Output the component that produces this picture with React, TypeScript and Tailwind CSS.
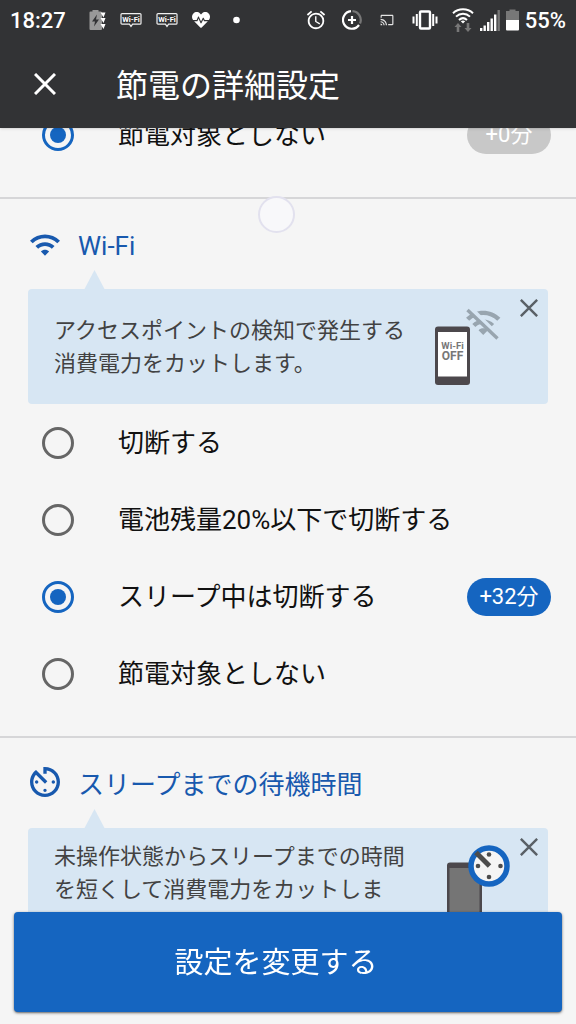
import { useState } from "react"
import type { ReactNode } from "react"
import { FaHeartbeat } from "react-icons/fa"
import { MdAccessAlarm, MdCast } from "react-icons/md"

type Option = { value: string; label: string; gain?: string }

const skipOption: Option = { value: "none", label: "節電対象としない", gain: "+0分" }

const wifiOptions: Option[] = [
  { value: "off", label: "切断する" },
  { value: "low", label: "電池残量20%以下で切断する" },
  { value: "sleep", label: "スリープ中は切断する", gain: "+32分" },
  { value: "none", label: "節電対象としない" },
]

const wifiPath =
  "M1 9l2 2c4.970-4.970 13.030-4.970 18 0l2-2C16.930 2.930 7.080 2.930 1 9zm8 8l3 3 3-3c-1.650-1.660-4.340-1.660-6 0zm-4-4l2 2c2.760-2.760 7.240-2.760 10 0l2-2C15.140 9.140 8.870 9.140 5 13z"

const WifiBubble = () => (
  <svg className="w-[22px] h-4 shrink-0" viewBox="0 0 22 16" fill="none" stroke="#f0f0f0" strokeWidth="1.2">
    <path d="M2 1.6h18a1 1 0 0 1 1 1v8.6a1 1 0 0 1-1 1h-7.4L11 14.4l-1.6-2.2H2a1 1 0 0 1-1-1V2.6a1 1 0 0 1 1-1z" />
    <text x="11" y="9.8" textAnchor="middle" fontSize="7.5" fontWeight="700" fill="#fff" stroke="none">Wi-Fi</text>
  </svg>
)

const StatusBar = () => (
  <div className="h-10 px-2.5 flex items-center justify-between text-[22px] font-medium">
    <div className="flex items-center gap-3.5">
      <span>18:27</span>
      {/* Batterie en charge */}
      <svg className="w-[26px] h-5 shrink-0" viewBox="0 0 26 20">
        <path d="M12.500 1.500V0h6v1.500H21l1 1V19q0 1-1 1H10.500q-1 0-1-1V2.500q0-1 1-1z" fill="#999" />
        <path d="M20.500 2.500h5l-2 5zM20.500 8h5l-2 5zM20.500 14h5l-2 5z" fill="#fff" />
        <path d="M17 4.500l-5 7h3l-1 5 5-7h-3z" fill="#323335" />
      </svg>
      <WifiBubble />
      <WifiBubble />
      <FaHeartbeat size={18} />
      <svg className="w-6 h-2" viewBox="0 0 24 8"><circle cx="12.500" cy="4" r="3.300" fill="#fff" /></svg>
    </div>
    <div className="flex items-center gap-3.5">
      <div className="flex items-center gap-4">
        <MdAccessAlarm size={22} className="-mx-px" />
        {/* Données */}
        <svg className="size-5" viewBox="0 0 20 20" fill="none" strokeWidth="2.2">
          <path d="M10.500 1.200A8.800 8.800 0 0 1 18 13.500" stroke="#777" />
          <path d="M9 1.200A8.800 8.800 0 1 0 17 15" stroke="#fff" />
          <path d="M10 6v8M6 10h8" stroke="#fff" />
        </svg>
        <MdCast size={14} className="mx-0.5 bg-clip-content text-[#e4e4e4]" />
        {/* Vibreur */}
        <svg className="w-[26px] h-5" viewBox="0 0 26 20" fill="none" stroke="#fff" strokeWidth="2">
          <rect x="8" y="1.500" width="10" height="17" rx="1" strokeWidth="2.400" />
          <path d="M4.800 4v12M21.200 4v12M1.500 6.500v7M24.500 6.500v7" />
        </svg>
      </div>
      <div className="flex items-center gap-1.5">
        <svg className="w-[22px] h-6" viewBox="0 0 22 24" fill="none" stroke="#fff" strokeWidth="2">
          <path d="M1 5.200c5.500-5.200 14.500-5.200 20 0M4 8.600c4-3.800 10-3.800 14 0M7 12c2.500-2.300 5.500-2.300 8 0" />
          <path d="M8.800 13.300q2.200-1.600 4.400 0L11 15.500z" fill="#fff" stroke="none" />
          <path d="M6 15l3.500 4H7.300v5H4.700v-5H2.500zM16 24l-3.500-4h2.200v-5h2.600v5h2.200z" fill="#777" stroke="none" />
        </svg>
        <svg className="w-5 h-[22px]" viewBox="0 0 20 22" fill="none" stroke="#fff" strokeWidth="2.4">
          <path d="M1.200 22v-3M4.700 22v-5.500M8.200 22v-9M11.700 22V9.500M15.200 22V5.500" />
          <path d="M18.700 22V1" stroke="#777" />
        </svg>
        <svg className="w-[13px] h-[22px]" viewBox="0 0 13 22">
          <path d="M3.500 2V.5h6V2H13v9H0V2z" fill="#777" />
          <path d="M0 11h13v9.500q0 1-1 1H1q-1 0-1-1z" fill="#fff" />
        </svg>
        <span>55%</span>
      </div>
    </div>
  </div>
)

const Cross = ({ className }: { className: string }) => (
  <svg className={className} viewBox="0 0 22 22" fill="none" stroke="currentColor">
    <path d="M1 1l20 20M21 1L1 21" />
  </svg>
)

const WifiIcon = () => (
  <svg className="w-[30px] h-[22px]" viewBox="1 4.400 22 15.600" fill="currentColor">
    <path d={wifiPath} />
  </svg>
)

const TimerIcon = () => (
  <svg className="size-[30px] -mt-1" viewBox="3 3 18 18" fill="currentColor">
    <path d="M11 17c0 .55.45 1 1 1s1-.45 1-1-.45-1-1-1-1 .45-1 1zm0-14v4h2V5.080c3.390.49 6 3.390 6 6.920 0 3.870-3.130 7-7 7s-7-3.130-7-7c0-1.680.59-3.220 1.580-4.420L12 13l1.410-1.410-6.800-6.800v.02C4.420 6.450 3 9.050 3 12c0 4.970 4.020 9 9 9 4.970 0 9-4.030 9-9s-4.030-9-9-9h-1zm7 9c0-.55-.45-1-1-1s-1 .45-1 1 .45 1 1 1 1-.45 1-1zM6 12c0 .55.45 1 1 1s1-.45 1-1-.45-1-1-1-1 .45-1 1z" />
  </svg>
)

const WifiOffPicture = () => (
  <svg className="size-[90px] shrink-0" viewBox="0 0 90 90">
    <rect x="5" y="24.500" width="35" height="58.500" rx="3" fill="#4c484c" />
    <rect x="8" y="30" width="29" height="44.500" fill="#fff" />
    <text x="22.500" y="46.500" textAnchor="middle" fontSize="9.500" fontWeight="700" fill="#777">Wi-Fi</text>
    <text x="22.500" y="57.500" textAnchor="middle" fontSize="12" fontWeight="700" fill="#777">OFF</text>
    <path d={wifiPath} transform="translate(34.500 1.700) scale(1.560)" fill="#98a5af" />
    <path d="M40 5.500l30 30" stroke="#d7e6f3" strokeWidth="4.500" />
    <path d="M37.500 8l30 28.500" stroke="#98a5af" strokeWidth="3.400" />
  </svg>
)

const SleepPicture = () => (
  <svg className="size-[90px] shrink-0" viewBox="0 0 90 90">
    <rect x="17" y="17.500" width="35" height="64" rx="3" fill="#4c484c" />
    <rect x="19.500" y="23" width="30" height="50" fill="#757575" />
    <circle cx="59" cy="21" r="18" fill="#f5f5f5" stroke="#1565c0" strokeWidth="5.500" />
    <g fill="#4c4c4c">
      <circle cx="59" cy="9.500" r="2.300" />
      <circle cx="70.500" cy="21" r="2.300" />
      <circle cx="59" cy="32" r="2.300" />
      <circle cx="48" cy="21" r="2.300" />
    </g>
    <path d="M46 7.500L59.500 21" stroke="#4c4c4c" strokeWidth="5" />
  </svg>
)

const Heading = ({ icon, children }: { icon: ReactNode; children: ReactNode }) => (
  <h2 className="mt-7 mb-[26px] h-9 px-[30px] flex items-center gap-[18px] text-[26px] text-[#1859ae]">
    {icon}
    <span className="pt-0.5">{children}</span>
  </h2>
)

const Hint = ({ picture, children }: { picture: ReactNode; children: ReactNode }) => (
  <div className="relative mx-7 min-h-[115px] py-3 pl-[26px] pr-7 flex items-center gap-4 rounded-sm bg-[#d7e6f3]">
    <svg className="absolute left-14 -top-[19px] w-[21px] h-5" viewBox="0 0 21 20" fill="#d7e6f3">
      <path d="M10.500 0L21 20H0z" />
    </svg>
    <p className="flex-1 text-[22px] leading-[33px] text-[#424242]">{children}</p>
    {picture}
    <button type="button" aria-label="閉じる" className="absolute top-0 right-0 p-2.5 text-[#5a6066]">
      <Cross className="size-[18px] stroke-3" />
    </button>
  </div>
)

const OptionRow = ({ name, option, checked, onSelect, muted }: {
  name: string
  option: Option
  checked: boolean
  onSelect?: () => void
  muted?: boolean
}) => (
  <label className="h-[77px] pl-[42px] pr-[25px] flex items-center gap-11 text-[26px] text-[#111]">
    <input
      type="radio"
      name={name}
      checked={checked}
      onChange={() => onSelect?.()}
      className="appearance-none size-8 shrink-0 rounded-full border-3 border-[#666] checked:border-[#1565c0] grid place-items-center checked:before:content-[''] checked:before:size-4 checked:before:rounded-full checked:before:bg-[#1565c0]"
    />
    <span className="flex-1 pt-0.5">{option.label}</span>
    {option.gain && (
      <span className={`w-21 h-[38px] flex items-center justify-center rounded-full text-[22px] text-white ${muted ? "bg-[#c8c8c8]" : "bg-[#1565c0]"}`}>
        {option.gain}
      </span>
    )}
  </label>
)

const App = () => {
  const [wifi, setWifi] = useState("sleep")

  return (
    <div className="h-screen flex flex-col overflow-hidden bg-[#f5f5f5] font-['Roboto','Noto_Sans_CJK_JP',sans-serif]">
      <header className="relative z-10 bg-[#323335] text-white shadow-sm">
        <StatusBar />
        <div className="h-22 px-[34px] flex items-center gap-[60px]">
          <button type="button" aria-label="閉じる">
            <Cross className="size-[22px] stroke-3" />
          </button>
          <h1 className="pt-1 text-[32px]">節電の詳細設定</h1>
        </div>
      </header>

      <main className="relative flex-1 min-h-0 overflow-hidden">
        {/* La liste est déjà défilée de quelques pixels */}
        <div className="-mt-8">
          <section className="pb-6 border-b-2 border-[#d6d6d8]">
            <OptionRow name="previous" option={skipOption} checked muted />
          </section>

          <section className="pb-6 border-b-2 border-[#d6d6d8]">
            <Heading icon={<WifiIcon />}>Wi-Fi</Heading>
            <Hint picture={<WifiOffPicture />}>アクセスポイントの検知で発生する消費電力をカットします。</Hint>
            {wifiOptions.map((option) => (
              <OptionRow
                key={option.value}
                name="wifi"
                option={option}
                checked={wifi === option.value}
                onSelect={() => setWifi(option.value)}
              />
            ))}
          </section>

          <section>
            <Heading icon={<TimerIcon />}>スリープまでの待機時間</Heading>
            <Hint picture={<SleepPicture />}>未操作状態からスリープまでの時間を短くして消費電力をカットします。</Hint>
          </section>
        </div>

        {/* Trace du doigt */}
        <div className="absolute left-[258px] top-17 size-[37px] rounded-full border-2 border-[#e2e1ee] bg-[#f8f8fa]" />
      </main>

      <div className="fixed bottom-3 inset-x-3.5 z-10">
        <button type="button" className="w-full h-25 pt-1 pr-6 rounded-sm bg-[#1565c0] text-white text-[29px] shadow-sm shadow-black/50">
          設定を変更する
        </button>
      </div>
    </div>
  )
}

export default App
